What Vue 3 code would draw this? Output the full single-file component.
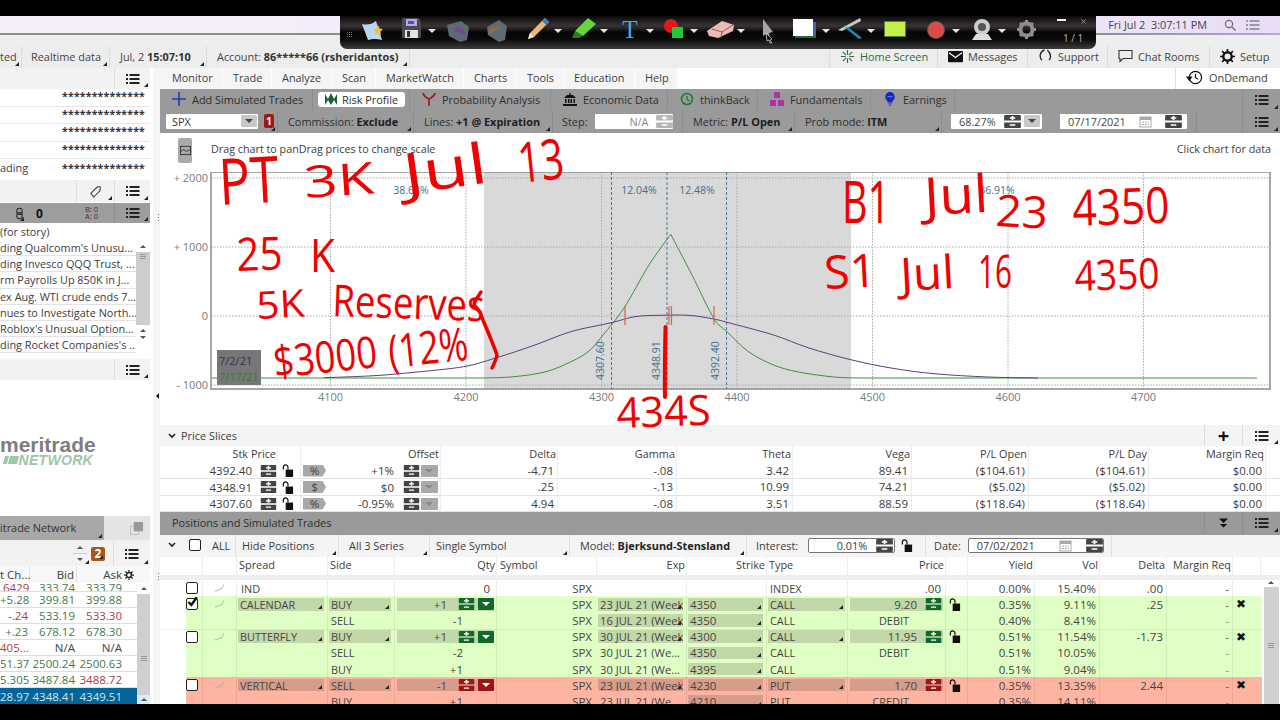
<script setup>
const W = 'Weekly)'

const statusLeft = [
  { text: 'ted', cls: 's1' },
  { text: 'Realtime data', cls: 's2' },
  { html: true, a: 'Jul, 2 ', b: '15:07:10', cls: 's3' },
  { html: true, a: 'Account: ', b: '86*****66 (rsheridantos)', cls: 's4' }
]
const tabs = ['Monitor', 'Trade', 'Analyze', 'Scan', 'MarketWatch', 'Charts', 'Tools', 'Education', 'Help']

const news = [
  'ding Qualcomm\'s Unusu...',
  'ding Invesco QQQ Trust, ...',
  'rm Payrolls Up 850K in J...',
  'ex Aug. WTI crude ends 7...',
  'nues to Investigate North...',
  'Roblox\'s Unusual Option...',
  'ding Rocket Companies\'s ...'
]
const quotes = [
  { c: '+5.28', b: '399.81', a: '399.88', ct: 'up', bt: 'up', at: 'up' },
  { c: '-.24', b: '533.19', a: '533.30', ct: 'dn', bt: 'up', at: 'dn' },
  { c: '+.23', b: '678.12', a: '678.30', ct: 'up', bt: 'up', at: 'up' },
  { c: '405...', b: 'N/A', a: 'N/A', ct: 'dn', bt: '', at: '' },
  { c: '51.37', b: '2500.24', a: '2500.63', ct: 'up', bt: 'up', at: 'up' },
  { c: '5.305', b: '3487.84', a: '3488.72', ct: 'up', bt: 'up', at: 'dn' },
  { c: '28.97', b: '4348.41', a: '4349.51', ct: '', bt: '', at: '', sel: true }
]

const sliceHead = ['Delta', 'Gamma', 'Theta', 'Vega', 'P/L Open', 'P/L Day', 'Margin Req']
const slices = [
  { stk: '4392.40', unit: '%', off: '+1%', v: ['-4.71', '-.08', '3.42', '89.41', '($104.61)', '($104.61)', '$0.00'] },
  { stk: '4348.91', unit: '$', off: '$0', v: ['.25', '-.13', '10.99', '74.21', '($5.02)', '($5.02)', '$0.00'] },
  { stk: '4307.60', unit: '%', off: '-0.95%', v: ['4.94', '-.08', '3.51', '88.59', '($118.64)', '($118.64)', '$0.00'] }
]

const rows = [
  { tone: '', check: 'off', spark: 1, spread: 'IND', side: '', qty: '0', exp: '', strike: '', type: 'INDEX', price: '.00', yld: '0.00%', vol: '15.40%', delta: '.00' },
  { tone: 'g', check: 'on', spark: 1, spread: 'CALENDAR', side: 'BUY', qty: '+1', ctl: 1, exp: '23 JUL 21 (' + W, expCtl: 1, strike: '4350', strikeCtl: 1, type: 'CALL', price: '9.20', yld: '0.35%', vol: '9.11%', delta: '.25', x: 1 },
  { tone: 'g', spread: '', side: 'SELL', qty: '-1', exp: '16 JUL 21 (' + W, expCtl: 1, strike: '4350', strikeCtl: 1, type: 'CALL', debit: 'DEBIT', yld: '0.40%', vol: '8.41%', delta: '', sub: 1 },
  { tone: 'g', check: 'off', spark: 1, spread: 'BUTTERFLY', side: 'BUY', qty: '+1', ctl: 1, exp: '30 JUL 21 (' + W, expCtl: 1, strike: '4300', strikeCtl: 1, type: 'CALL', price: '11.95', yld: '0.51%', vol: '11.54%', delta: '-1.73', x: 1, top: 1 },
  { tone: 'g', spread: '', side: 'SELL', qty: '-2', exp: '30 JUL 21 (We...', strike: '4350', strikeCtl: 1, type: 'CALL', debit: 'DEBIT', yld: '0.51%', vol: '10.05%', delta: '', sub: 1 },
  { tone: 'g', spread: '', side: 'BUY', qty: '+1', exp: '30 JUL 21 (We...', strike: '4395', strikeCtl: 1, type: 'CALL', yld: '0.51%', vol: '9.04%', delta: '', sub: 1 },
  { tone: 'r', check: 'off', spark: 1, spread: 'VERTICAL', side: 'SELL', qty: '-1', ctl: 1, exp: '23 JUL 21 (' + W, expCtl: 1, strike: '4230', strikeCtl: 1, type: 'PUT', price: '1.70', yld: '0.35%', vol: '13.35%', delta: '2.44', x: 1 },
  { tone: 'r', spread: '', side: 'BUY', qty: '+1', exp: '23 JUL 21 (We...', strike: '4210', strikeCtl: 1, type: 'PUT', debit: 'CREDIT', yld: '0.35%', vol: '14.11%', delta: '', sub: 1 }
]

// chart geometry, in screen pixels
const gridX = [330.5, 466, 601.5, 737, 872.5, 1008, 1143.5]
const gridY = [178, 247, 316, 385]

// catmull-rom through the sampled points, so the curves don't look polygonal
function smooth(pts) {
  let d = `M${pts[0][0]} ${pts[0][1]}`
  for (let i = 0; i < pts.length - 1; i++) {
    const p0 = pts[i - 1] || pts[i]
    const p1 = pts[i]
    const p2 = pts[i + 1]
    const p3 = pts[i + 2] || p2
    const c1x = (p1[0] + (p2[0] - p0[0]) / 6).toFixed(1)
    const c1y = (p1[1] + (p2[1] - p0[1]) / 6).toFixed(1)
    const c2x = (p2[0] - (p3[0] - p1[0]) / 6).toFixed(1)
    const c2y = (p2[1] - (p3[1] - p1[1]) / 6).toFixed(1)
    d += `C${c1x} ${c1y} ${c2x} ${c2y} ${p2[0]} ${p2[1]}`
  }
  return d
}
const greenFlat = 'M212 378H483M859 378H1257'
const greenLeft = smooth([[483, 378], [514, 376.7], [546, 371.7], [571, 361.7], [589, 351], [603, 335], [624, 308], [649, 265], [670.7, 234.3]])
const greenRight = smooth([[670.7, 234.3], [692, 275], [713.6, 318], [727, 331.7], [748.6, 351.7], [773.6, 365], [798.6, 372], [834, 377], [859, 378]])
const purpleLine = smooth([[324, 377.7], [374, 375.7], [417, 372], [463.6, 366.7], [495.7, 358], [535, 345], [570.7, 331.7], [610, 323], [635, 316.7], [660, 315.3], [688.6, 315.3], [713.6, 319], [727, 322.3], [773.6, 335], [809, 348], [852, 360], [891, 368], [934, 373.7], [988, 377], [1038, 378]])

// the handwritten notes on the chart, placed where the pen wrote them
const notes = [
  { t: 'PT', x: 220, y: 205, w: 60, fs: 64, r: -3 },
  { t: '3K', x: 305, y: 198, w: 70, fs: 44, r: -4 },
  { t: 'Jul', x: 406, y: 194, w: 84, fs: 56, r: -8 },
  { t: '13', x: 520, y: 183, w: 46, fs: 56, r: -6 },
  { t: '25', x: 237, y: 271, w: 46, fs: 46, r: -2 },
  { t: 'K', x: 310, y: 272, w: 25, fs: 46, r: 0 },
  { t: '5K', x: 257, y: 319, w: 48, fs: 38, r: -3 },
  { t: 'Reserves', x: 332, y: 316, w: 152, fs: 44, r: 2 },
  { t: '$3000', x: 275, y: 378, w: 104, fs: 44, r: -6 },
  { t: '(12%', x: 390, y: 368, w: 80, fs: 46, r: -6 },
  { t: '434S', x: 617, y: 428, w: 94, fs: 42, r: -2 },
  { t: 'B1', x: 842, y: 223, w: 48, fs: 58, r: 0 },
  { t: 'Jul', x: 925, y: 215, w: 64, fs: 52, r: -3 },
  { t: '23', x: 995, y: 226, w: 52, fs: 44, r: 3 },
  { t: '4350', x: 1073, y: 226, w: 97, fs: 50, r: -2 },
  { t: 'S1', x: 825, y: 289, w: 52, fs: 46, r: -3 },
  { t: 'Jul', x: 901, y: 291, w: 54, fs: 46, r: -3 },
  { t: '16', x: 978, y: 288, w: 34, fs: 46, r: 0 },
  { t: '4350', x: 1075, y: 291, w: 85, fs: 42, r: -2 }
]
</script>

<template>
  <div class="screen">
    <svg class="defs" width="0" height="0">
      <defs>
        <symbol id="i-menu" viewBox="0 0 14 12">
          <rect x="0" y="1" width="2" height="2" /><rect x="3.5" y="1" width="10" height="2" />
          <rect x="0" y="5" width="2" height="2" /><rect x="3.5" y="5" width="10" height="2" />
          <rect x="0" y="9" width="2" height="2" /><rect x="3.5" y="9" width="10" height="2" />
        </symbol>
        <symbol id="i-spin" viewBox="0 0 18 14">
          <path d="M1 0h16a1 1 0 0 1 1 1v5H0V1a1 1 0 0 1 1-1zM0 8h18v5a1 1 0 0 1-1 1H1a1 1 0 0 1-1-1z" fill="currentColor" />
          <path d="M8 1h2v1.5h2V4H10v1.5H8V4H6V2.5h2zM6 10h6v1.5H6z" fill="#fff" />
        </symbol>
        <symbol id="i-lock" viewBox="0 0 12 14">
          <path d="M1 6V3.5a2.5 2.5 0 0 1 5 0V6" fill="none" stroke="#111" stroke-width="1.3" />
          <rect x="3.5" y="6" width="8" height="8" fill="#111" />
        </symbol>
        <symbol id="i-cal" viewBox="0 0 13 13">
          <rect x="1" y="2" width="11" height="10" fill="#fff" stroke="#aaa" />
          <rect x="1" y="2" width="11" height="3" fill="#aaa" />
          <path d="M3 7h2M6 7h2M9 7h1M3 9.500h2M6 9.500h2M9 9.500h1" stroke="#aaa" />
        </symbol>
      </defs>
    </svg>

    <div class="bar-top"></div>

    <div class="window">
      <div class="titlebar">
        <div class="title-strip">
          <span class="clock">Fri Jul 2&nbsp; 3:07:11 PM</span>
          <svg class="title-ico" viewBox="0 0 12 12"><circle cx="5" cy="5" r="3.600" fill="none" stroke="#667" stroke-width="1.100" /><path d="M8 8l3.500 3.500" stroke="#667" stroke-width="1.300" /></svg>
          <svg class="title-ico wide" viewBox="0 0 14 12" fill="#99a"><use href="#i-menu" /></svg>
        </div>
        <div class="title-line"></div>
      </div>

      <div class="status">
        <div class="status-left">
          <div v-for="s in statusLeft" :key="s.cls" class="st-cell corner" :class="s.cls">
            <template v-if="s.html">{{ s.a }}<b>{{ s.b }}</b></template>
            <template v-else>{{ s.text }}</template>
          </div>
        </div>
        <div class="status-right">
          <div class="st-r r1 home">
            <svg viewBox="0 0 16 16" class="st-ico"><path d="M8 1v5M8 10v5M1 8h5M10 8h5M3 3l3.500 3.500M13 3l-3.500 3.500M3 13l3.500-3.500M13 13l-3.500-3.500" stroke="#2d6b3c" stroke-width="1.200" /></svg>
            Home Screen
          </div>
          <div class="st-r r2">
            <svg viewBox="0 0 16 12" class="st-ico"><rect width="16" height="12" rx="1" fill="#111" /><path d="M1 2l7 5 7-5" fill="none" stroke="#fff" stroke-width="1.200" /></svg>
            Messages
          </div>
          <div class="st-r r3">
            <svg viewBox="0 0 14 16" class="st-ico"><path d="M3 12C0 8 1 3 6 1M11 12c2-3 2-7-2-11" fill="none" stroke="#222" stroke-width="1.400" /></svg>
            Support
          </div>
          <div class="st-r r4">
            <svg viewBox="0 0 15 14" class="st-ico"><path d="M1 1h13v8H5l-3 3V9H1z" fill="none" stroke="#333" stroke-width="1.100" /></svg>
            Chat Rooms
          </div>
          <div class="st-r r5">
            <svg viewBox="0 0 16 16" class="st-ico"><circle cx="8" cy="8" r="4.500" fill="none" stroke="#111" stroke-width="2.500" /><path d="M8 0v3M8 13v3M0 8h3M13 8h3M2.300 2.300l2 2M11.700 11.700l2 2M13.700 2.300l-2 2M4.300 11.700l-2 2" stroke="#111" stroke-width="1.800" /></svg>
            Setup
          </div>
        </div>
      </div>

      <div class="body">
        <aside class="left">
          <div class="l-head"><div class="l-menu corner"><svg class="menu"><use href="#i-menu" /></svg></div></div>
          <div class="l-rows">
            <div class="l-row"><span></span><span class="stars">**************</span></div>
            <div class="l-row"><span></span><span class="stars">**************</span></div>
            <div class="l-row"><span></span><span class="stars">**************</span></div>
            <div class="l-row"><span></span><span class="stars">**************</span></div>
            <div class="l-row"><span>ading</span><span class="stars">**************</span></div>
          </div>
          <div class="l-tool">
            <div class="l-tag corner">
              <svg viewBox="0 0 14 14" width="13" height="13"><path d="M2 9l7-7h3v4l-7 7z" fill="none" stroke="#333" stroke-width="1.100" /></svg>
            </div>
            <div class="l-menu corner"><svg class="menu"><use href="#i-menu" /></svg></div>
          </div>
          <div class="l-dark">
            <div class="chain corner">
              <svg viewBox="0 0 8 14" width="7" height="13"><rect x="1" y="1" width="6" height="7" rx="2.500" fill="none" stroke="#222" stroke-width="1.200" /><rect x="1" y="6" width="6" height="7" rx="2.500" fill="none" stroke="#222" stroke-width="1.200" /></svg>
            </div>
            <b class="dark-zero">0</b>
            <div class="ba"><span>B: 0</span><span>A: 0</span></div>
            <div class="l-menu corner"><svg class="menu"><use href="#i-menu" /></svg></div>
          </div>
          <div class="l-news">
            <div class="news-first">(for story)</div>
            <div class="news-list">
              <div class="news-rows">
                <div v-for="n in news" :key="n" class="news-row">{{ n }}</div>
              </div>
              <div class="scroll">
                <i class="arr up"></i>
                <div class="thumb news-thumb"><span class="grip"></span></div>
                <i class="arr up"></i>
                <i class="arr dn"></i>
              </div>
            </div>
          </div>
          <div class="l-tool2">
            <div class="l-menu corner"><svg class="menu"><use href="#i-menu" /></svg></div>
          </div>
          <div class="l-logo">
            <div class="logo-name">meritrade</div>
            <div class="logo-net"><i class="b1"></i><i class="b2"></i><span>NETWORK</span></div>
          </div>
          <div class="l-title">
            <div class="corner l-title-text">itrade Network</div>
            <div class="l-title-ico">
              <svg viewBox="0 0 14 14" width="13" height="13"><rect x="4" y="0" width="10" height="10" fill="#999" /><path d="M0.500 4.500h3M0.500 4.500v9h9v-3" fill="none" stroke="#bbb" /></svg>
            </div>
          </div>
          <div class="l-tool3">
            <div class="stepper corner"><i class="arr up"></i><i class="line"></i><i class="arr dn"></i></div>
            <div class="badge2 corner">2</div>
            <div class="l-menu corner"><svg class="menu"><use href="#i-menu" /></svg></div>
          </div>
          <div class="q-head">
            <span class="h-cell">t Ch...</span>
            <span class="h-cell">Bid</span>
            <span class="h-cell">Ask</span>
            <svg class="gear" viewBox="0 0 16 16"><circle cx="8" cy="8" r="4" fill="none" stroke="#222" stroke-width="2.500" /><path d="M8 0v3M8 13v3M0 8h3M13 8h3M2.300 2.300l2 2M11.700 11.700l2 2M13.700 2.300l-2 2M4.300 11.700l-2 2" stroke="#222" stroke-width="2" /></svg>
          </div>
          <div class="q-body">
            <div class="q-rows">
              <div class="q-row q-cut">
                <span class="dn">.6429</span><span class="up">333.74</span><span class="up">333.79</span>
              </div>
              <div v-for="q in quotes" :key="q.b + q.c" class="q-row" :class="{ sel: q.sel }">
                <span :class="q.ct">{{ q.c }}</span><span :class="q.bt">{{ q.b }}</span><span :class="q.at">{{ q.a }}</span>
              </div>
            </div>
            <div class="scroll q-scroll">
              <i class="arr up"></i>
              <div class="q-track"></div>
              <div class="thumb q-thumb"><span class="grip"></span></div>
              <i class="q-end"><i class="arr up"></i></i>
            </div>
          </div>
        </aside>

        <div class="split">
          <i class="dots"></i>
          <i class="arr lf"></i>
          <i class="dots"></i>
        </div>

        <main class="main">
          <div class="tabs">
            <div v-for="t in tabs" :key="t" class="tab">{{ t }}</div>
            <div class="ondemand">
              <svg viewBox="0 0 18 18" width="17" height="17"><circle cx="10" cy="9" r="6.500" fill="none" stroke="#111" stroke-width="1.300" /><path d="M10 5v4l3 2" fill="none" stroke="#111" stroke-width="1.200" /><path d="M0 8h7l-3.500 5z" fill="#111" /></svg>
              OnDemand
            </div>
          </div>

          <div class="tool1">
            <div class="t1-cell">
              <svg class="t1-ico" viewBox="0 0 14 14"><path d="M7 0v14M0 7h14" stroke="#1d3fb0" stroke-width="1.600" /></svg>
              Add Simulated Trades
            </div>
            <div class="t1-cell pill-wrap">
              <div class="pill">
                <svg class="t1-ico" viewBox="0 0 14 14"><path d="M1 13V2l3 5 3-6 3 6 3-5v11l-3-5-3 5-3-5z" fill="#15622b" /></svg>
                Risk Profile
              </div>
            </div>
            <div class="t1-cell">
              <svg class="t1-ico" viewBox="0 0 14 14"><path d="M1 1c1 4 4 5 6 6 2-1 5-2 6-6M7 7v7" fill="none" stroke="#9c1d2a" stroke-width="1.700" /></svg>
              Probability Analysis
            </div>
            <div class="t1-cell">
              <svg class="t1-ico" viewBox="0 0 14 14"><path d="M7 0l1 3h2l3 3H1l3-3h2zM2 7h1.500v4H2zM5 7h1.500v4H5zM7.500 7H9v4H7.500zM10.500 7H12v4h-1.500zM0 12h14v2H0z" fill="#111" /></svg>
              Economic Data
            </div>
            <div class="t1-cell">
              <svg class="t1-ico" viewBox="0 0 14 14"><circle cx="7" cy="7" r="5.500" fill="none" stroke="#1f7a36" stroke-width="1.600" /><path d="M7 4v3.500l2.500 1.500" fill="none" stroke="#1f7a36" stroke-width="1.300" /></svg>
              thinkBack
            </div>
            <div class="t1-cell">
              <svg class="t1-ico" viewBox="0 0 14 14" fill="#a834a8"><rect x="4" y="0" width="6" height="6" /><rect x="0" y="8" width="6" height="6" /><rect x="8" y="8" width="6" height="6" /></svg>
              Fundamentals
            </div>
            <div class="t1-cell">
              <svg class="t1-ico" viewBox="0 0 14 16"><path d="M7 0a5.500 5.500 0 0 1 3 10v2H4v-2A5.500 5.500 0 0 1 7 0z" fill="#1226c4" /><path d="M5 13h4v1H5zM6 15h2v1H6z" fill="#1226c4" /><path d="M4 6l2-1 2 1 2-1" fill="none" stroke="#8cf" stroke-width=".8" /></svg>
              Earnings
            </div>
            <div></div>
            <div class="t-menu corner"><svg class="menu"><use href="#i-menu" /></svg></div>
          </div>

          <div class="tool2">
            <div class="t2-cell spx">
              <div class="spx-box">SPX<span class="drop"></span></div>
            </div>
            <div class="t2-cell badge-cell corner"><span class="badge1">1</span></div>
            <div class="t2-cell corner pad">Commission: <b>Exclude</b></div>
            <div class="t2-cell corner pad">Lines: <b>+1 @ Expiration</b></div>
            <div class="t2-cell step pad">
              <span>Step:</span>
              <div class="step-box"><span>N/A</span><svg class="spin"><use href="#i-spin" /></svg></div>
            </div>
            <div class="t2-cell corner pad">Metric: <b>P/L Open</b></div>
            <div class="t2-cell corner pad">Prob mode: <b>ITM</b></div>
            <div class="t2-cell pct">
              <div class="pct-box"><span>68.27%</span><svg class="spin"><use href="#i-spin" /></svg><span class="drop"></span></div>
            </div>
            <div class="t2-cell date">
              <div class="date-box"><span>07/17/2021</span><svg class="cal"><use href="#i-cal" /></svg><svg class="spin"><use href="#i-spin" /></svg></div>
            </div>
            <div></div>
            <div class="t-menu corner"><svg class="menu"><use href="#i-menu" /></svg></div>
          </div>

          <section class="chart">
            <div class="chart-head">
              <div class="chart-btn">
                <svg viewBox="0 0 12 12" width="11" height="11"><rect x="0.500" y="1.500" width="11" height="9" fill="none" stroke="#333" /><path d="M1 7l3-2 3 2 4-2" fill="none" stroke="#333" /></svg>
              </div>
              <span class="chart-hint">Drag chart to panDrag prices to change scale</span>
              <span class="chart-data">Click chart for data</span>
            </div>
            <svg class="plot" viewBox="160 172 1120 253">
              <rect x="484" y="172" width="367" height="217" fill="#d9d9d9" />
              <line v-for="x in gridX" :key="x" :x1="x" :x2="x" y1="172" y2="389" class="grid" />
              <line v-for="y in gridY" :key="y" x1="211" x2="1270" :y1="y" :y2="y" class="grid" />
              <rect x="211" y="172" width="1059" height="217" fill="none" stroke="#8a8a8a" stroke-width="1.500" />
              <text class="axis" x="208" y="182" text-anchor="end">+ 2000</text>
              <text class="axis" x="208" y="251" text-anchor="end">+ 1000</text>
              <text class="axis" x="208" y="320" text-anchor="end">0</text>
              <text class="axis" x="208" y="389" text-anchor="end">- 1000</text>
              <text v-for="(x, i) in gridX" :key="'l' + x" class="axis" :x="x" y="401" text-anchor="middle">{{ 4100 + i * 100 }}</text>
              <line v-for="x in [611.5, 667, 726.5]" :key="'d' + x" :x1="x" :x2="x" y1="172" y2="389" stroke="#3d7a9c" stroke-dasharray="3 2" />
              <text class="pct-l" x="411" y="194" text-anchor="middle">38.68%</text>
              <text class="pct-l" x="639" y="194" text-anchor="middle">12.04%</text>
              <text class="pct-l" x="697" y="194" text-anchor="middle">12.48%</text>
              <text class="pct-l" x="997" y="194" text-anchor="middle">36.91%</text>
              <text class="pct-l" transform="translate(604 380) rotate(-90)">4307.60</text>
              <text class="pct-l" transform="translate(660 380) rotate(-90)">4348.91</text>
              <text class="pct-l" transform="translate(719 380) rotate(-90)">4392.40</text>
              <path :d="greenFlat" fill="none" stroke="#3f8f3f" stroke-width="1" />
              <path :d="greenLeft" fill="none" stroke="#3f8f3f" stroke-width="1" />
              <path :d="greenRight" fill="none" stroke="#3f8f3f" stroke-width="1" />
              <path :d="purpleLine" fill="none" stroke="#5c3f78" stroke-width="1" />
              <path d="M625 306v19M669 306v19M671.500 306v19M714 306v19" stroke="#d6654a" stroke-width="1.200" />
              <rect x="217" y="350" width="44" height="35" fill="#777" />
              <text class="tag" x="219" y="365" fill="#3c2a55">7/2/21</text>
              <text class="tag" x="219" y="381" fill="#2e7d32">7/17/21</text>
            </svg>
            <!-- pen annotation over the chart -->
            <svg class="ink" viewBox="160 133 1120 292">
              <text
                v-for="n in notes"
                :key="n.t + n.x"
                class="note"
                :x="n.x"
                :y="n.y"
                :font-size="n.fs"
                :textLength="n.w"
                lengthAdjust="spacingAndGlyphs"
                :transform="`rotate(${n.r} ${n.x} ${n.y})`"
              >{{ n.t }}</text>
              <path d="M481 292c-3 5-7 9-7 13 3 3 6 6 7 10 5 13 12 28 16 40-1 5-3 9-5 13" fill="none" stroke="#f00000" stroke-width="3.500" stroke-linecap="round" />
              <path d="M665.500 327c-.5 25-1 48-.5 70" fill="none" stroke="#f00000" stroke-width="4" stroke-linecap="round" />
            </svg>
          </section>

          <div class="slice-head">
            <svg class="chev" viewBox="0 0 8 6"><path d="M1 1l3 3 3-3" fill="none" stroke="#222" stroke-width="1.600" /></svg>
            <span class="slice-title">Price Slices</span>
            <div class="head-end">
              <div class="end-cell plus">+</div>
              <div class="t-menu corner"><svg class="menu"><use href="#i-menu" /></svg></div>
            </div>
          </div>
          <div class="slices">
            <div class="sl-row sl-h">
              <span class="c-r">Stk Price</span><span></span><span class="c-r">Offset</span>
              <span v-for="h in sliceHead" :key="h" class="c-r">{{ h }}</span>
            </div>
            <div v-for="s in slices" :key="s.stk" class="sl-row">
              <span class="stk"><span class="stk-v">{{ s.stk }}</span><svg class="spin sm"><use href="#i-spin" /></svg></span>
              <span class="lk"><svg class="lock"><use href="#i-lock" /></svg></span>
              <span class="off">
                <span class="unit">{{ s.unit }}</span>
                <span class="off-v">{{ s.off }}</span>
                <svg class="spin sm"><use href="#i-spin" /></svg>
                <span class="drop grey"></span>
              </span>
              <span v-for="(v, i) in s.v" :key="i" class="c-v">{{ v }}</span>
            </div>
          </div>

          <div class="pos-head">
            <span class="pos-title">Positions and Simulated Trades</span>
            <div class="head-end">
              <div class="end-cell">
                <svg viewBox="0 0 12 10" width="11" height="10"><path d="M1 0h10L6 5z M2 6h8L6 10z" fill="#111" /></svg>
              </div>
              <div class="t-menu corner"><svg class="menu"><use href="#i-menu" /></svg></div>
            </div>
          </div>

          <div class="filters">
            <div class="f-cell f-all">
              <svg class="chev" viewBox="0 0 8 6"><path d="M1 1l3 3 3-3" fill="none" stroke="#222" stroke-width="1.600" /></svg>
              <span class="box"></span>
              <span>ALL</span>
            </div>
            <div class="f-cell corner">Hide Positions</div>
            <div class="f-cell corner f-wide">All 3 Series</div>
            <div class="f-cell corner">Single Symbol</div>
            <div class="f-cell corner f-wide">Model:&nbsp;<b>Bjerksund-Stensland</b></div>
            <div class="f-cell f-int">
              <span>Interest:</span>
              <div class="f-box int-box"><span>0.01%</span><svg class="spin"><use href="#i-spin" /></svg></div>
              <svg class="lock"><use href="#i-lock" /></svg>
            </div>
            <div class="f-cell f-date">
              <span>Date:</span>
              <div class="f-box date2"><span>07/02/2021</span><svg class="cal"><use href="#i-cal" /></svg><svg class="spin"><use href="#i-spin" /></svg></div>
            </div>
          </div>

          <div class="trade-head">
            <span></span><span></span>
            <span class="th l">Spread</span>
            <span class="th l">Side</span>
            <span class="th r">Qty</span>
            <span class="th l sym">Symbol</span>
            <span class="th r exp-h">Exp</span>
            <span class="th r">Strike</span>
            <span class="th l">Type</span>
            <span class="th r">Price</span>
            <span class="th"></span>
            <span class="th r">Yield</span>
            <span class="th r">Vol</span>
            <span class="th r">Delta</span>
            <span class="th r">Margin Req</span>
            <span class="th"></span>
          </div>
          <div class="trade-strip"></div>

          <div class="trades">
            <div class="trade-rows">
              <div v-for="(r, i) in rows" :key="i" class="tr" :class="[r.tone, { top: r.top }]">
                <span class="td ck">
                  <span v-if="r.check" class="box" :class="{ on: r.check === 'on' }">
                    <svg v-if="r.check === 'on'" viewBox="0 0 10 10"><path d="M2 5l2.500 2.500L9 1" fill="none" stroke="#111" stroke-width="2" /></svg>
                  </span>
                </span>
                <span class="td ck">
                  <svg v-if="r.spark" class="spark" viewBox="0 0 14 10"><path d="M1 8c2 1 3 0 5-2 1 1 3 1 3-1 1-1 2-2 2-4" fill="none" stroke="#9aa" /></svg>
                </span>
                <span class="td pad-l"><span :class="r.spark && r.tone ? 'ctl corner full' : ''">{{ r.spread }}</span></span>
                <span class="td pad-s"><span :class="r.spark && r.tone ? 'ctl corner full' : ''">{{ r.side }}</span></span>
                <span class="td qty big">
                  <span v-if="r.ctl" class="ctl qty-ctl">
                    <span class="qty-v">{{ r.qty }}</span>
                    <svg class="spin sm tint"><use href="#i-spin" /></svg>
                    <span class="drop tint"></span>
                  </span>
                  <span v-else-if="r.tone" class="qty-sub">{{ r.qty }}</span>
                  <span v-else class="qty-ind">{{ r.qty }}</span>
                </span>
                <span class="td sym-v">SPX</span>
                <span class="td exp"><span :class="r.expCtl ? 'ctl corner full clip' : 'plain'">{{ r.exp }}</span></span>
                <span class="td strike big"><span :class="r.strikeCtl ? 'ctl corner full' : ''">{{ r.strike }}</span></span>
                <span class="td type"><span :class="r.tone && r.price ? 'ctl corner full' : 'type-v'">{{ r.type }}</span></span>
                <span class="td price big">
                  <span v-if="r.price && r.tone" class="ctl price-ctl"><span class="price-v">{{ r.price }}</span><svg class="spin sm tint"><use href="#i-spin" /></svg></span>
                  <span v-else-if="r.price" class="price-ind">{{ r.price }}</span>
                  <span v-else-if="r.debit" class="debit">{{ r.debit }}</span>
                </span>
                <span class="td lk2"><svg v-if="r.price && r.tone" class="lock"><use href="#i-lock" /></svg></span>
                <span class="td num big">{{ r.yld }}</span>
                <span class="td num big">{{ r.vol }}</span>
                <span class="td num big">{{ r.delta }}</span>
                <span class="td num dash" :class="{ faint: r.sub }">-</span>
                <span class="td xx"><b v-if="r.x">✖</b></span>
              </div>
            </div>
            <div class="scroll t-scroll">
              <i class="arr up"></i>
              <div class="thumb t-thumb"><span class="grip"></span></div>
            </div>
          </div>
        </main>
      </div>
    </div>

    <div class="bar-bottom"></div>

    <!-- floating drawing tool palette, lies over the window -->
    <svg class="palette" viewBox="340 16 756 33">
      <defs>
        <linearGradient id="pal" x1="0" y1="0" x2="0" y2="1">
          <stop offset="0" stop-color="#0a0a0a" />
          <stop offset=".3" stop-color="#3a3335" />
          <stop offset=".5" stop-color="#050505" />
          <stop offset=".7" stop-color="#0a0a0a" />
          <stop offset="1" stop-color="#3c3c3c" />
        </linearGradient>
      </defs>
      <path d="M340 16h756v26a7 7 0 0 1-7 7H347a7 7 0 0 1-7-7z" fill="url(#pal)" />
      <g fill="#777"><rect x="347" y="32" width="1" height="1" /><rect x="349" y="32" width="1" height="1" /><rect x="351" y="32" width="1" height="1" /><rect x="347" y="34" width="1" height="1" /><rect x="349" y="34" width="1" height="1" /><rect x="351" y="34" width="1" height="1" /><rect x="347" y="36" width="1" height="1" /><rect x="349" y="36" width="1" height="1" /><rect x="351" y="36" width="1" height="1" /></g>
      <!-- note -->
      <path d="M362 24q8 2 14-3l6 19q-8-2-14 0z" fill="#bcd6f2" />
      <path d="M378 25l1.500 3.500 3.500.5-2.500 2.500.5 3.500-3-2-3 2 .5-3.500-2.500-2.500 3.500-.5z" fill="#f0c23c" />
      <!-- floppy -->
      <path d="M402 18h17l2 4v16h-19z" fill="#4b4b4f" />
      <rect x="406" y="19" width="11" height="7" fill="#b5a9e0" /><rect x="408" y="21" width="6" height="3" fill="#3a5bc0" />
      <rect x="405" y="30" width="13" height="8" fill="#e4e4e4" /><rect x="407" y="31" width="3" height="6" fill="#333" />
      <!-- open / save as -->
      <path d="M447 25l14-4 8 6-2 13-7 2-11-6z" fill="#5f6b73" /><path d="M454 28c4-2 8 0 12 5l-3 2c-3-3-5-4-8-3z" fill="#6d4a8e" />
      <path d="M487 27l12-7 8 6-2 14-6 2-11-7z" fill="#5f6b73" /><path d="M488 33c2-5 7-7 12-6l-1 3c-3-1-6 0-8 4z" fill="#9c6a3a" />
      <!-- pencil -->
      <path d="M545 18l4 4-15 15-6 2 2-6z" fill="#eab676" /><path d="M545 18l4 4-3 3-4-4z" fill="#3d7fb8" /><path d="M528 39l2-6 4 4z" fill="#f4e3c8" />
      <!-- highlighter -->
      <path d="M588 18l8 6-13 12-8-5z" fill="#68d63a" /><path d="M575 31l8 5-4 2h-7z" fill="#2f7a1e" />
      <!-- T tool, a glyph on the palette -->
      <text x="630" y="38" text-anchor="middle" font-family="Liberation Serif, serif" font-size="25" fill="#52a7d9">T</text>
      <!-- shapes -->
      <circle cx="671" cy="26" r="7" fill="#e5161a" /><rect x="672" y="27" width="11" height="11" fill="#21c83c" />
      <!-- eraser -->
      <path d="M707 31l15-10 12 4-1 6-15 7-9-2z" fill="#e7bcb8" /><path d="M712 29l10 3-1 6M722 32l11-7" fill="none" stroke="#a9504a" />
      <!-- arrow cursor -->
      <path d="M763 19l10 13-4 1 1 6-3 1-1-6-3 2z" fill="#a5a5a5" /><path d="M766 33l6 6-2 1 2 3-2 0-1-3-2 1z" fill="#111" stroke="#ddd" stroke-width=".7" />
      <!-- rectangle -->
      <rect x="795" y="35" width="21" height="3" fill="#1f6b3a" /><rect x="812" y="22" width="4" height="14" fill="#3a62b8" /><rect x="793" y="19" width="20" height="17" fill="#fff" />
      <!-- line -->
      <path d="M838 30l22-12 1 3-19 10z" fill="#c9c9c9" /><path d="M848 27l14 11-3 1-14-11z" fill="#1e88b8" />
      <!-- fill -->
      <rect x="884.500" y="21.500" width="21" height="15" fill="#c4f04a" stroke="#4a7a4a" stroke-dasharray="1 1" />
      <!-- record -->
      <circle cx="936" cy="30" r="8.500" fill="#d5534e" stroke="#555" /><circle cx="936" cy="30" r="6" fill="#e04a46" />
      <!-- webcam -->
      <circle cx="982" cy="27" r="8" fill="#ccc" /><circle cx="982" cy="27" r="4" fill="#555" /><path d="M976 34h12l4 6h-20z" fill="#ddd" />
      <!-- gear -->
      <circle cx="1026.500" cy="29.500" r="6" fill="none" stroke="#8d8d8d" stroke-width="4" />
      <path d="M1026.500 20v4M1026.500 35v4M1017 29.500h4M1032 29.500h4M1020 23l2.800 2.800M1030.200 33.200l2.800 2.800M1033 23l-2.800 2.800M1022.800 33.200l-2.800 2.800" stroke="#8d8d8d" stroke-width="3" />
      <!-- drop arrows -->
      <g fill="#e6e6e6">
        <path d="M428 29h8l-4 4z" /><path d="M554 29h8l-4 4z" /><path d="M600 29h8l-4 4z" /><path d="M646 29h8l-4 4z" /><path d="M690 29h8l-4 4z" />
        <path d="M737 29h8l-4 4z" /><path d="M822 29h8l-4 4z" /><path d="M867 29h8l-4 4z" /><path d="M952 29h8l-4 4z" /><path d="M998 29h8l-4 4z" />
      </g>
      <rect x="1057" y="19" width="9" height="2" fill="#f2f2f2" />
      <path d="M1081.500 19.500l4 4M1085.500 19.500l-4 4" stroke="#999" />
      <text x="1063" y="42" font-family="Open Sans, sans-serif" font-size="10" fill="#b5b5b5">1 / 1</text>
    </svg>
  </div>
</template>

<style>
html, body {
  margin: 0;
  background: #000;
}
</style>

<style scoped>
.screen {
  position: relative;
  width: 1280px;
  height: 720px;
  overflow: hidden;
  display: flex;
  flex-direction: column;
  background: #000;
  font-family: "Open Sans", "Liberation Sans", sans-serif;
  font-size: 10.900px;
  color: #3c3c3c;
}
.defs {
  position: absolute;
}
.bar-top,
.bar-bottom {
  height: 16px;
  flex: none;
  background: #000;
}
.window {
  height: 688px;
  flex: none;
  display: flex;
  flex-direction: column;
  overflow: hidden;
  background: #fff;
}
.big {
  font-size: 11.500px;
}

/* title */
.titlebar {
  height: 30px;
  flex: none;
  background: #eeeeee;
}
.title-strip {
  height: 17px;
  display: flex;
  align-items: center;
  justify-content: flex-end;
  padding-right: 20px;
  background: linear-gradient(90deg, #f6effb, #f2e9fa 70%, #e9ddf5);
}
.clock {
  color: #444;
  font-size: 10.900px;
  margin-right: 17px;
}
.title-ico {
  width: 12px;
  height: 12px;
  margin-right: 10px;
}
.title-ico.wide {
  width: 14px;
  margin-right: 0;
}
.title-line {
  height: 2px;
  background: linear-gradient(90deg, #8d8d8d, #8d8d8d 85%, #b8a6dc);
}

/* status bar */
.status {
  height: 22px;
  flex: none;
  display: flex;
  justify-content: space-between;
  background: #ededed;
  color: #444;
}
.status-left,
.status-right {
  display: flex;
  height: 100%;
}
.st-cell,
.st-r {
  display: flex;
  align-items: center;
  border-right: 1px solid #dcdcdc;
  padding-bottom: 2px;
  box-sizing: border-box;
}
.st-cell {
  white-space: pre;
}
.st-r {
  white-space: nowrap;
}
.st-cell b {
  color: #333;
}
.s1 { width: 22px; }
.s2 { width: 88px; padding-left: 9px; }
.s3 { width: 97px; padding-left: 10px; }
.s4 { width: 203px; padding-left: 10px; }
.st-r {
  border-right: 0;
  border-left: 1px solid #dcdcdc;
  gap: 5px;
  padding-left: 10px;
}
.st-ico {
  width: 15px;
  height: 15px;
  flex: none;
}
.r1 { width: 108px; color: #2d6b3c; }
.r2 { width: 90px; }
.r3 { width: 80px; }
.r4 { width: 102px; }
.r5 { width: 71px; }

.corner {
  position: relative;
}
.corner::after {
  content: "";
  position: absolute;
  right: 2px;
  bottom: 2px;
  border-style: solid;
  border-width: 0 0 4px 4px;
  border-color: transparent transparent #222 transparent;
}

.menu {
  width: 14px;
  height: 12px;
  fill: #222;
}
.spin {
  width: 17px;
  height: 13px;
  flex: none;
  color: #444;
}
.spin.sm {
  height: 12px;
}
.lock {
  width: 12px;
  height: 13px;
  flex: none;
}
.cal {
  width: 13px;
  height: 13px;
  flex: none;
}
.drop {
  width: 16px;
  height: 12px;
  flex: none;
  background: #c8c8c8;
  position: relative;
  display: inline-block;
  border-radius: 1px;
}
.drop::after {
  content: "";
  position: absolute;
  left: 4px;
  top: 4px;
  border-style: solid;
  border-width: 4px 4px 0 4px;
  border-color: #444 transparent transparent transparent;
}
.drop.grey {
  background: #a9a9a9;
}
.drop.grey::after {
  border-top-color: #8a8a8a;
}

/* body */
.body {
  flex: 1;
  min-height: 0;
  display: flex;
}
.left {
  width: 150px;
  flex: none;
  display: flex;
  flex-direction: column;
  overflow: hidden;
}
.split {
  width: 10px;
  flex: none;
  background: #f4f4f4;
  border-left: 3px solid #fff;
  box-sizing: border-box;
  display: flex;
  flex-direction: column;
  align-items: center;
  padding-top: 146px;
}
.dots {
  width: 1px;
  height: 8px;
  background: repeating-linear-gradient(#777 0 1px, transparent 1px 3px);
  margin-left: 3px;
}
.split .arr.lf {
  margin-top: 171px;
  margin-bottom: 174px;
  margin-left: 2px;
}
.arr {
  display: block;
  width: 0;
  height: 0;
  border-style: solid;
}
.arr.up {
  border-width: 0 3px 3px 3px;
  border-color: transparent transparent #555 transparent;
}
.arr.dn {
  border-width: 3px 3px 0 3px;
  border-color: #555 transparent transparent transparent;
}
.arr.lf {
  border-width: 3px 3px 3px 0;
  border-color: transparent #111 transparent transparent;
}

.l-head {
  height: 21px;
  flex: none;
  display: flex;
  justify-content: flex-end;
  background: #f2f2f2;
}
.l-menu {
  width: 36px;
  height: 100%;
  display: flex;
  align-items: center;
  justify-content: center;
  border-left: 1px solid #dedede;
  box-sizing: border-box;
}
.l-rows {
  flex: none;
  height: 91px;
}
.l-row {
  height: 17.500px;
  box-sizing: border-box;
  display: flex;
  justify-content: space-between;
  align-items: center;
  padding: 0 5px 2px 0;
  border-bottom: 1px solid #e6e6e6;
  white-space: nowrap;
}
.l-row:last-child {
  height: 19px;
  border-bottom: 0;
}
.stars {
  font-weight: 700;
  font-size: 10.500px;
  letter-spacing: 0.200px;
  color: #333;
}
.l-tool,
.l-tool2 {
  flex: none;
  height: 22px;
  display: flex;
  justify-content: flex-end;
  background: #f2f2f2;
}
.l-tool2 {
  height: 21px;
  margin-top: 2px;
}
.l-tag {
  width: 37px;
  display: flex;
  align-items: center;
  justify-content: center;
  border-left: 1px solid #dedede;
}
.l-dark {
  flex: none;
  height: 20px;
  margin-top: 1px;
  background: #9d9d9d;
  display: flex;
  align-items: center;
}
.chain {
  width: 26px;
  padding-left: 16px;
  height: 100%;
  display: flex;
  align-items: center;
  box-sizing: border-box;
}
.dark-zero {
  margin-left: 10px;
  width: 49px;
  color: #111;
  font-size: 12px;
}
.ba {
  width: 29px;
  display: flex;
  flex-direction: column;
  font-size: 7.500px;
  line-height: 7.500px;
  color: #333;
}
.l-dark .l-menu {
  border-left-color: #8c8c8c;
}
.l-news {
  flex: none;
  height: 134px;
  background: #fff;
}
.news-first {
  height: 17px;
  line-height: 18px;
  white-space: nowrap;
}
.news-list {
  display: flex;
  height: 117px;
}
.news-rows {
  width: 136px;
  overflow: hidden;
}
.news-row {
  height: 16.200px;
  line-height: 15px;
  white-space: nowrap;
  box-sizing: border-box;
  border-bottom: 1px solid #e2e2e2;
  overflow: hidden;
}
.scroll {
  flex: 1;
  background: #fff;
  display: flex;
  flex-direction: column;
  align-items: center;
}
.news-list .scroll {
  padding-top: 5px;
  gap: 4px;
}
.thumb {
  width: 100%;
  background: #cdcdcd;
  display: flex;
  align-items: center;
  justify-content: center;
}
.news-thumb {
  height: 73px;
  align-items: flex-start;
  padding-top: 2px;
  box-sizing: border-box;
}
.grip {
  display: block;
  width: 6px;
  height: 5px;
  background: repeating-linear-gradient(#999 0 1px, transparent 1px 2px);
}
.l-logo {
  flex: none;
  height: 136px;
  background: #fff;
  box-sizing: border-box;
  padding-top: 55px;
  overflow: hidden;
}
.logo-name {
  width: 95px;
  text-align: right;
  font-family: "Liberation Sans", sans-serif;
  font-weight: 700;
  font-size: 21px;
  line-height: 19px;
  color: #7e7e7e;
}
.logo-net {
  width: 93px;
  display: flex;
  align-items: center;
  justify-content: flex-end;
  gap: 1px;
  font-family: "Liberation Sans", sans-serif;
  font-weight: 700;
  font-style: italic;
  font-size: 14px;
  line-height: 12px;
  letter-spacing: 0.300px;
  color: #9dc7a5;
}
.logo-net i {
  height: 8px;
  background: #9dc7a5;
  transform: skewX(-15deg);
}
.logo-net .b1 { width: 4px; }
.logo-net .b2 { width: 9px; }
.l-title {
  flex: none;
  height: 24px;
  display: flex;
}
.l-title-text {
  width: 104px;
  background: #a8a8a8;
  line-height: 24px;
  white-space: nowrap;
  color: #333;
}
.l-title-ico {
  flex: 1;
  background: #e4e4e4;
  display: flex;
  align-items: center;
  justify-content: center;
  padding-left: 18px;
}
.l-tool3 {
  flex: none;
  height: 26px;
  display: flex;
  justify-content: flex-end;
  background: #f2f2f2;
  border-top: 1px solid #eee;
  box-sizing: border-box;
}
.stepper {
  width: 22px;
  display: flex;
  flex-direction: column;
  align-items: center;
  justify-content: center;
  gap: 4px;
}
.stepper .line {
  display: block;
  width: 14px;
  height: 1px;
  background: #ccc;
}
.badge2 {
  width: 14px;
  height: 14px;
  margin: 6px 8px 0 0;
  background: #a8581c;
  color: #fff;
  font-weight: 700;
  font-size: 12px;
  line-height: 14px;
  text-align: center;
  border-radius: 2px;
}
.l-tool3 .l-menu {
  width: 37px;
}
.q-head {
  flex: none;
  height: 17px;
  display: grid;
  grid-template-columns: 30px 47px 47px 13px;
  align-items: center;
  background: #f8f8f8;
}
.h-cell {
  text-align: right;
  white-space: nowrap;
  padding-right: 2px;
  border-right: 1px solid #e2e2e2;
  line-height: 17px;
  font-size: 11.500px;
}
.h-cell:nth-child(3) {
  border-right: 0;
}
.gear {
  width: 10px;
  height: 10px;
}
.q-body {
  flex: 1;
  min-height: 0;
  display: flex;
}
.q-rows {
  width: 137px;
  flex: none;
}
.q-row {
  height: 16px;
  box-sizing: border-box;
  display: grid;
  grid-template-columns: 28px 47px 47px;
  align-items: center;
  white-space: nowrap;
  text-align: right;
  border-bottom: 1px solid #dedede;
  color: #444;
  font-size: 11.500px;
}
.q-row.q-cut {
  height: 9px;
  overflow: hidden;
  align-items: end;
  line-height: 9px;
}
.q-row span {
  overflow: visible;
  direction: rtl;
  unicode-bidi: plaintext;
}
.q-row .up { color: #3f7a4a; }
.q-row .dn { color: #a4404a; }
.q-row.sel {
  background: #04659a;
  color: #cfe4ef;
  border-bottom: 0;
}
.q-scroll {
  position: relative;
  padding-top: 4px;
}
.q-track {
  height: 0;
}
.q-thumb {
  flex: 1;
  margin-top: 4px;
  background: #cfcfcf;
  align-items: flex-end;
  padding-bottom: 34px;
  box-sizing: border-box;
}
.q-end {
  display: flex;
  width: 100%;
  height: 9px;
  justify-content: center;
  align-items: center;
  background: #d8ecf6;
}

/* main */
.main {
  flex: 1;
  min-width: 0;
  display: flex;
  flex-direction: column;
  overflow: hidden;
}
.tabs {
  flex: none;
  height: 21px;
  display: grid;
  grid-template-columns: 63px 49px 60px 44px 88px 53px 47px 71px 43px 1fr;
  background: #fff;
}
.tab {
  line-height: 20px;
  padding-left: 12px;
  background: #f5f5f5;
  border-right: 1px solid #fff;
  white-space: nowrap;
  color: #3c3c3c;
}
.tab:nth-child(n + 2) {
  padding-left: 10px;
}
.ondemand {
  justify-self: end;
  width: 105px;
  box-sizing: border-box;
  display: flex;
  align-items: center;
  gap: 6px;
  padding: 0 0 2px 10px;
  border-left: 1px solid #e0e0e0;
  white-space: nowrap;
}
.tool1,
.tool2 {
  flex: none;
  display: grid;
  background: #9a9a9a;
  color: #2e2e2e;
}
.tool1 {
  height: 22px;
  grid-template-columns: 153px 97px 141px 117px 90px 113px 84px 1fr 38px;
}
.t1-cell {
  display: flex;
  align-items: center;
  gap: 6px;
  padding: 0 0 2px 12px;
  box-sizing: border-box;
  white-space: nowrap;
  border-right: 1px solid #8d8d8d;
}
.t1-ico {
  width: 14px;
  height: 14px;
  flex: none;
}
.pill-wrap {
  padding-left: 5px;
}
.pill {
  width: 87px;
  height: 15px;
  background: #fff;
  border-radius: 3px;
  display: flex;
  align-items: center;
  gap: 4px;
  padding-left: 6px;
  box-sizing: border-box;
}
.t-menu {
  display: flex;
  align-items: center;
  justify-content: center;
  border-left: 1px solid #8d8d8d;
  box-sizing: border-box;
}
.tool2 {
  height: 22px;
  grid-template-columns: 102px 16px 136px 139px 130px 112px 147px 109px 146px 1fr 38px;
}
.t2-cell {
  display: flex;
  align-items: center;
  white-space: pre;
  padding-bottom: 2px;
  box-sizing: border-box;
  border-right: 1px solid #8d8d8d;
}
.t2-cell.pad {
  padding-left: 10px;
}
.t2-cell b {
  color: #1d1d1d;
  font-weight: 700;
}
.spx {
  border-right: 0;
  padding-left: 6px;
}
.spx-box {
  width: 92px;
  height: 15px;
  background: #fff;
  border-radius: 1px;
  display: flex;
  align-items: center;
  justify-content: space-between;
  box-sizing: border-box;
  padding: 0 1px 0 6px;
  color: #333;
}
.badge-cell {
  padding-left: 2px;
}
.badge1 {
  display: block;
  width: 10px;
  height: 14px;
  background: #a01818;
  color: #fff;
  font-weight: 700;
  font-size: 10.500px;
  line-height: 14px;
  text-align: center;
  border-radius: 2px;
}
.t2-cell.step {
  gap: 7px;
  padding-left: 9px;
}
.step-box {
  width: 78px;
  height: 15px;
  background: #fff;
  display: flex;
  align-items: center;
  justify-content: flex-end;
  gap: 7px;
  box-sizing: border-box;
  border-radius: 1px;
  color: #888;
}
.step-box .spin {
  color: #b5b5b5;
}
.pct {
  padding-left: 9px;
  border-right: 0;
}
.pct-box,
.date-box {
  height: 15px;
  background: #fff;
  display: flex;
  align-items: center;
  box-sizing: border-box;
  border-radius: 1px;
  color: #444;
}
.pct-box {
  width: 91px;
  padding-left: 8px;
  gap: 8px;
}
.pct-box .drop {
  margin-left: -5px;
}
.date {
  padding-left: 9px;
  border-right: 1px solid #8d8d8d;
}
.date-box {
  width: 127px;
  padding-left: 8px;
  gap: 13px;
}

/* chart */
.chart {
  position: relative;
  flex: none;
  height: 292px;
  background: #fff;
}
.chart-head {
  height: 39px;
  display: flex;
  align-items: flex-start;
  padding-left: 18px;
  padding-right: 9px;
  box-sizing: border-box;
}
.chart-btn {
  width: 14px;
  height: 25px;
  margin-top: 5px;
  background: #aaa;
  border-radius: 2px;
  display: flex;
  align-items: center;
  justify-content: center;
}
.chart-hint {
  margin-left: 19px;
  margin-top: 9px;
  font-size: 10.750px;
  color: #3c3c3c;
}
.chart-data {
  margin-left: auto;
  margin-top: 9px;
  font-size: 10.750px;
  color: #3c3c3c;
}
.plot {
  display: block;
  width: 1120px;
  height: 253px;
  font-family: "Open Sans", sans-serif;
}
.grid {
  stroke: #a8a8a8;
  stroke-dasharray: 1.500 1.500;
}
.axis {
  font-size: 11px;
  fill: #7a7a7a;
}
.pct-l {
  font-size: 10.500px;
  fill: #3f6f8f;
}
.tag {
  font-size: 11px;
}
.ink {
  position: absolute;
  left: 0;
  top: 0;
  width: 1120px;
  height: 292px;
  overflow: visible;
  pointer-events: none;
}
.note {
  font-family: "Open Sans", "DejaVu Sans", sans-serif;
  font-weight: 400;
  fill: #f00000;
}

/* slices */
.slice-head,
.pos-head {
  flex: none;
  display: flex;
  align-items: center;
}
.slice-head {
  height: 21px;
  background: #f4f4f4;
}
.chev {
  width: 8px;
  height: 6px;
  flex: none;
}
.slice-head .chev {
  margin-left: 8px;
}
.slice-title {
  margin-left: 5px;
  color: #3c3c3c;
}
.head-end {
  margin-left: auto;
  height: 100%;
  display: flex;
}
.end-cell {
  width: 37px;
  display: flex;
  align-items: center;
  justify-content: center;
  border-left: 1px solid #dcdcdc;
}
.head-end .t-menu {
  width: 38px;
  border-left-color: #dcdcdc;
}
.plus {
  font-size: 20px;
  font-weight: 700;
  color: #111;
  line-height: 20px;
}
.slices {
  flex: none;
}
.sl-row {
  height: 16.500px;
  display: grid;
  grid-template-columns: 118px 23px 140px 117px 119px 116px 119px 117px 120px 117px;
  align-items: center;
  box-sizing: border-box;
  border-bottom: 1px solid #e2e2e2;
  white-space: nowrap;
  font-size: 11.500px;
}
.sl-h {
  border-bottom: 0;
  font-size: 10.900px;
}
.sl-h > span {
  border-right: 1px solid #ececec;
  height: 100%;
  line-height: 16px;
}
.c-r {
  text-align: right;
  padding-right: 1px;
}
.c-v {
  text-align: right;
  padding-right: 3px;
  border-right: 1px solid #ececec;
  height: 100%;
  line-height: 16px;
}
.stk,
.off {
  display: flex;
  align-items: center;
  height: 100%;
}
.stk {
  justify-content: flex-end;
}
.stk-v {
  margin-right: 8px;
}
.stk .spin {
  margin-right: 1px;
}
.lk {
  display: flex;
  align-items: center;
  padding-left: 4px;
  border-right: 1px solid #ececec;
  height: 100%;
}
.off {
  padding-left: 2px;
  border-right: 1px solid #ececec;
}
.unit {
  width: 23px;
  height: 12px;
  line-height: 12px;
  text-align: center;
  background: #a8a8a8;
  clip-path: polygon(0 0, 85% 0, 100% 50%, 85% 100%, 0 100%);
  color: #444;
  flex: none;
}
.off-v {
  width: 68px;
  text-align: right;
  margin-right: 9px;
  flex: none;
}
.off .drop {
  margin-left: 1px;
  width: 17px;
}

.pos-head {
  height: 23px;
  background: #9a9a9a;
  color: #2e2e2e;
  padding-bottom: 1px;
  box-sizing: border-box;
}
.pos-title {
  margin-left: 12px;
  margin-bottom: 2px;
}
.pos-head .end-cell,
.pos-head .t-menu {
  border-left-color: #8d8d8d;
}

/* filters */
.filters {
  flex: none;
  height: 22px;
  display: grid;
  grid-template-columns: 76px 103px 91px 140px 177px 179px 186px;
  background: #f4f4f4;
}
.f-cell {
  display: flex;
  align-items: center;
  white-space: nowrap;
  padding: 0 0 2px 6px;
  box-sizing: border-box;
  border-right: 1px solid #e0e0e0;
}
.f-cell.f-wide {
  padding-left: 10px;
}
.f-cell b {
  color: #222;
}
.f-cell.f-all {
  padding-left: 8px;
}
.f-all .box {
  margin: 0 11px 0 13px;
}
.box {
  display: block;
  box-sizing: border-box;
  width: 12px;
  height: 12px;
  border: 1.500px solid #222;
  border-radius: 2px;
  background: #fff;
  flex: none;
  position: relative;
}
.box svg {
  position: absolute;
  left: -1px;
  top: -3px;
  width: 12px;
  height: 12px;
}
.f-box {
  height: 15px;
  box-sizing: border-box;
  background: #fff;
  border: 1px solid #777;
  border-radius: 2px;
  display: flex;
  align-items: center;
}
.f-cell.f-int {
  padding-left: 9px;
}
.int-box {
  width: 87px;
  margin: 0 6px 0 10px;
  justify-content: flex-end;
  gap: 9px;
  padding-right: 1px;
}
.f-cell.f-date {
  padding-left: 8px;
}
.date2 {
  width: 136px;
  margin-left: 7px;
  padding-left: 8px;
  gap: 24px;
}
.date2 .cal {
  margin-right: -14px;
}
.date2 .spin {
  margin-left: auto;
}

/* trades */
.trade-head,
.tr {
  display: grid;
  grid-template-columns: 43px 34px 91px 67px 102px 100px 90px 80px 81px 98px 22px 67px 65px 67px 66px 28px;
}
.trade-head {
  flex: none;
  height: 18px;
  background: #fff;
  align-items: stretch;
  padding-left: 0;
}
.trade-head > span {
  border-right: 1px solid #ececec;
  line-height: 16px;
  white-space: nowrap;
}
.th.l { padding-left: 2px; }
.th.r { text-align: right; padding-right: 1px; }
.th.sym { padding-left: 3px; }
.trade-strip {
  flex: none;
  height: 5px;
  background: #eeeeee;
}
.trades {
  flex: 1;
  min-height: 0;
  display: flex;
  overflow: hidden;
}
.trade-rows {
  width: 1102px;
  flex: none;
}
.tr {
  height: 16.200px;
  align-items: stretch;
  background: linear-gradient(90deg, #fff 26px, transparent 26px);
  color: #444;
  white-space: nowrap;
}
.tr.g { background-color: #dfffc5; }
.tr.r { background-color: #ffb4a2; }
.tr.top { box-shadow: inset 0 1px 0 rgba(0, 0, 0, 0.06); }
.tr.g, .tr.r { --ctl: #c2d8a8; --tint: #0f6a2a; }
.tr.r { --ctl: #d69d8a; --tint: #9c1414; }
.td {
  display: flex;
  align-items: center;
  min-width: 0;
  height: 100%;
  box-sizing: border-box;
  border-right: 1px solid rgba(0, 0, 0, 0.07);
}
.ck {
  justify-content: flex-end;
  padding-right: 4px;
}
.td.ck:first-child {
  width: 43px;
  justify-content: flex-end;
  padding-right: 4px;
}
.td.ck:nth-child(2) {
  justify-content: center;
  padding-right: 0;
}
.spark {
  width: 12px;
  height: 10px;
}
.ctl {
  background: var(--ctl, #ddd);
  display: flex;
  align-items: center;
  height: 12.500px;
}
.ctl.full {
  width: 100%;
  padding-left: 2px;
  box-sizing: border-box;
}
.ctl.clip {
  overflow: hidden;
  padding-right: 5px;
  text-overflow: clip;
  white-space: nowrap;
}
.pad-l { padding: 0 3px 0 1px; }
.pad-l > span { padding-left: 2px; }
.pad-l > span:not(.ctl) { padding-left: 3px; }
.pad-s { padding: 0 3px 0 1px; }
.pad-s > span:not(.ctl) { padding-left: 2px; }
.qty {
  justify-content: flex-end;
  padding: 0 2px;
}
.qty-ctl {
  width: 98px;
  justify-content: flex-end;
  gap: 3px;
}
.qty-v {
  margin-right: 8px;
}
.spin.tint {
  color: var(--tint);
}
.drop.tint {
  background: var(--tint);
}
.drop.tint::after {
  border-top-color: #fff;
}
.qty-sub {
  margin-right: 31px;
}
.qty-ind {
  margin-right: 4px;
}
.sym-v {
  justify-content: flex-end;
  padding-right: 5px;
  border-right: 0;
  font-size: 11.500px;
}
.exp {
  padding: 0 3px 0 1px;
  font-size: 11.200px;
}
.exp .plain {
  padding-left: 2px;
}
.strike {
  padding: 0 3px 0 1px;
}
.type {
  padding: 0 2px 0 1px;
}
.type-v {
  padding-left: 2px;
}
.price {
  padding: 0 2px;
  justify-content: flex-end;
}
.price-ctl {
  width: 100%;
  justify-content: flex-end;
  gap: 8px;
  padding-right: 1px;
  box-sizing: border-box;
}
.price-ind {
  margin-right: 2px;
}
.debit {
  margin-right: 34px;
  font-size: 10.900px;
}
.lk2 {
  padding-left: 3px;
}
.num {
  justify-content: flex-end;
  padding-right: 3px;
}
.dash {
  color: #555;
}
.dash.faint {
  color: #888;
}
.xx {
  justify-content: flex-start;
  padding-left: 3px;
  border-right: 0;
}
.xx b {
  font-family: "DejaVu Sans", sans-serif;
  font-size: 12px;
  font-weight: 400;
  color: #111;
}
.t-scroll {
  padding-top: 1px;
  gap: 3px;
}
.t-thumb {
  flex: 1;
  align-items: center;
  background: #d0d0d0;
  width: 15px;
}
.palette {
  position: absolute;
  left: 340px;
  top: 16px;
  width: 756px;
  height: 33px;
}
</style>
